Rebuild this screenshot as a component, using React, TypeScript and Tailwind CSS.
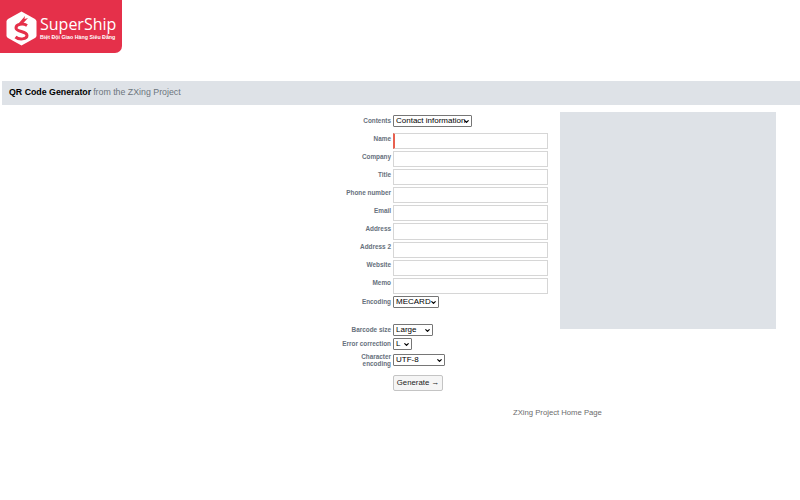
import { ChevronDown } from "lucide-react";

const fieldLabels = [
  "Name",
  "Company",
  "Title",
  "Phone number",
  "Email",
  "Address",
  "Address 2",
  "Website",
  "Memo",
];

function Label({ children }: { children: React.ReactNode }) {
  return (
    <div className="w-[62px] shrink-0 text-right text-[6.400px] leading-[7.500px] font-bold text-[#66707c]">
      {children}
    </div>
  );
}

function Select({ options, width }: { options: string[]; width: string }) {
  return (
    <div className={`${width} relative h-[12px] shrink-0`}>
      <select className="block h-full w-full appearance-none rounded-[1px] border border-[#767676] bg-white pl-[2px] text-[8px] leading-[10px] text-black">
        {options.map((o) => (
          <option key={o}>{o}</option>
        ))}
      </select>
      <ChevronDown
        size={7}
        strokeWidth={4}
        className="pointer-events-none absolute top-[3px] right-[2px] text-black"
      />
    </div>
  );
}

export default function App() {
  return (
    <div className="h-[500px] w-[800px] overflow-hidden bg-white font-['Liberation_Sans',Arial,sans-serif]">
      {/* logo */}
      <div className="flex h-[53px] w-[122px] items-center gap-[3px] rounded-br-[7px] bg-[#e5304a] pl-[6px]">
        <svg width="31" height="35" viewBox="0 0 31 35" className="mt-[3px] shrink-0">
          <path
            d="M15.500 0.500 L29 8 Q30.500 9 30.500 10.500 L30.500 24.500 Q30.500 26 29 27 L15.500 34.500 L2 27 Q0.500 26 0.500 24.500 L0.500 10.500 Q0.500 9 2 8 Z"
            fill="#fff"
          />
          <path
            d="M21 14.500 C17 12 10 13 10 17 C10 21 21 20 21 24.500 C21 28.500 13 29 9.500 26"
            fill="none"
            stroke="#e5304a"
            strokeWidth="3"
          />
          <path d="M13 12 L19 5 L18.500 8 L22 7 L16 13.500 Z" fill="#e5304a" />
        </svg>
        <div className="mt-[3px] flex flex-col">
          <div className="text-[16px] leading-[19px] text-white font-['Open_Sans',sans-serif]">SuperShip</div>
          <div className="text-[5.300px] leading-[7px] font-bold text-white whitespace-nowrap">
            Biệt Đội Giao Hàng Siêu Đẳng
          </div>
        </div>
      </div>

      {/* title bar */}
      <div className="mt-[28px] ml-[2px] flex h-[24px] items-center bg-[#dee2e7] pl-[7px] text-[8.800px]">
        <span className="font-bold text-black">QR Code Generator</span>
        <span className="ml-[2px] text-[#6c757d]">from the ZXing Project</span>
      </div>

      <div className="mt-[7px] flex pl-[329px]">
        {/* form */}
        <div className="w-[231px] pt-[3px]">
          <div className="flex h-[12px] items-center gap-[2px]">
            <Label>Contents</Label>
            <Select options={["Contact information"]} width="w-[79px]" />
          </div>

          <div className="mt-[6px] flex flex-col gap-[2px]">
            {fieldLabels.map((label, i) => (
              <div key={label} className="flex h-[16.100px] gap-[2px] pt-[1.500px]">
                <Label>{label}</Label>
                <input
                  className={`-mt-[1.500px] h-[16.100px] w-[155px] border border-[#d6d6d6] bg-white ${
                    i === 0 ? "border-l-2 border-l-[#e8604f]" : ""
                  }`}
                />
              </div>
            ))}
          </div>

          <div className="mt-[2px] flex h-[12px] items-center gap-[2px]">
            <Label>Encoding</Label>
            <Select options={["MECARD"]} width="w-[46px]" />
          </div>

          <div className="mt-[16px] flex h-[12px] items-center gap-[2px]">
            <Label>Barcode size</Label>
            <Select options={["Large"]} width="w-[40px]" />
          </div>
          <div className="mt-[2px] flex h-[12px] items-center gap-[2px]">
            <Label>Error correction</Label>
            <Select options={["L"]} width="w-[19px]" />
          </div>
          <div className="mt-[3px] flex h-[15px] items-center gap-[2px]">
            <Label>
              Character
              <br />
              encoding
            </Label>
            <Select options={["UTF-8"]} width="w-[52px]" />
          </div>

          <div className="mt-[7px] pl-[64px]">
            <button className="block h-[16px] w-[50px] rounded-[2px] border border-[#c4c4c4] bg-[#f5f5f5] text-[7.800px] leading-none text-[#222]">
              Generate →
            </button>
          </div>
        </div>

        {/* qr panel */}
        <div className="h-[217px] w-[216px] bg-[#dee2e7]" />
      </div>

      <div className="mt-[17px] pl-[513px] text-[7.700px] leading-[10px] text-[#6b6b6b]">ZXing Project Home Page</div>
    </div>
  );
}
